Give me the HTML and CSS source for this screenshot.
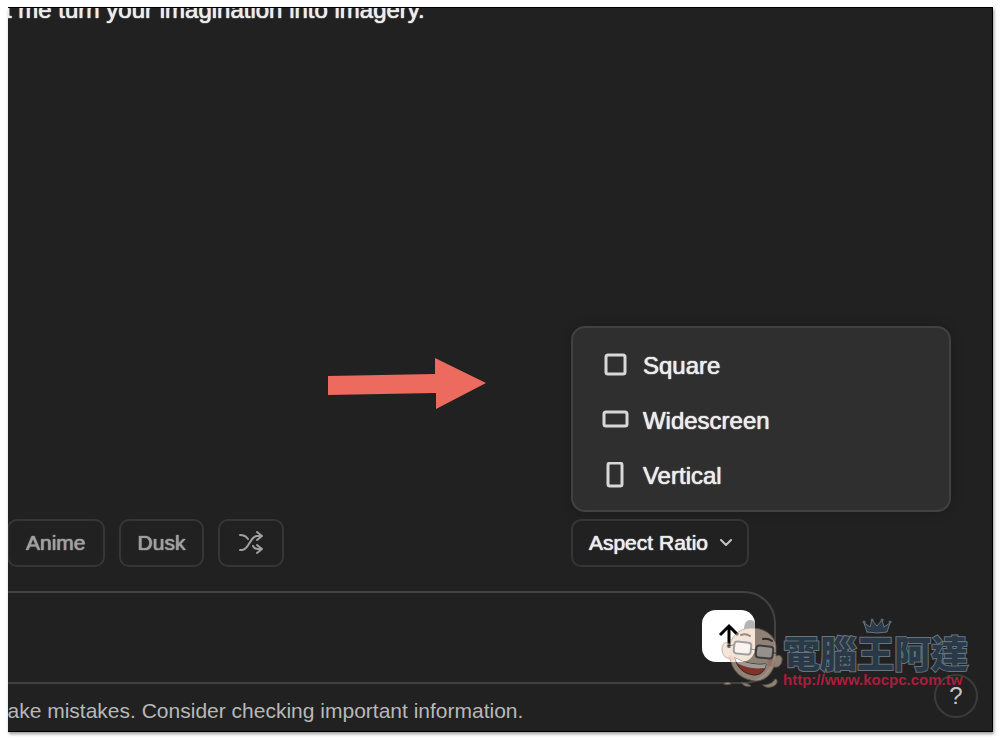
FILE: index.html
```html
<!DOCTYPE html>
<html lang="en">

<head>
    <meta charset="UTF-8">
    <meta name="viewport" content="width=device-width, initial-scale=1.0">
    <title>Image chat</title>
    <link rel="stylesheet" href="styles.css">
</head>

<body>
    <div class="frame">
        <p class="message">t me turn your imagination into imagery.</p>

        <main class="chat">
            <!-- Style chips and aspect ratio -->
            <div class="toolbar">
                <div class="chips">
                    <button type="button" class="chip">Anime</button>
                    <button type="button" class="chip">Dusk</button>
                    <button type="button" class="chip chip-icon" aria-label="Shuffle">
                        <svg width="26" height="24" viewBox="0 0 26 24">
                            <path d="M2 4c4 0 6 1 8 4M2 19h2c7 0 8-14 15-14h5M15 15c1 2 3 3 5 3h4M19 1l5 4-5 4M19 14l5 4-5 4" />
                        </svg>
                    </button>
                </div>

                <div class="dropdown">
                    <button type="button" class="chip chip-ratio" aria-haspopup="menu" aria-expanded="true">
                        Aspect Ratio
                        <svg width="12" height="8" viewBox="0 0 12 8">
                            <path d="M1 1l5 5 5-5" />
                        </svg>
                    </button>
                    <div class="menu" role="menu">
                        <button type="button" class="menu-item" role="menuitem">
                            <svg width="28" height="28" viewBox="0 0 28 28">
                                <rect x="5" y="3" width="19" height="19" rx="2" />
                            </svg>
                            Square
                        </button>
                        <button type="button" class="menu-item" role="menuitem">
                            <svg width="28" height="28" viewBox="0 0 28 28">
                                <rect x="3" y="5" width="23" height="14" rx="2" />
                            </svg>
                            Widescreen
                        </button>
                        <button type="button" class="menu-item" role="menuitem">
                            <svg width="28" height="28" viewBox="0 0 28 28">
                                <rect x="7" y="1" width="14" height="23" rx="2" />
                            </svg>
                            Vertical
                        </button>
                    </div>
                </div>
            </div>

            <!-- Prompt box -->
            <form class="composer">
                <textarea class="prompt" aria-label="Message" rows="1"></textarea>
                <button type="button" class="send" aria-label="Send">
                    <svg width="24" height="26" viewBox="0 0 24 26">
                        <path d="M12 25V3M3 12l9-9 9 9" />
                    </svg>
                </button>
            </form>
        </main>

        <p class="note">make mistakes. Consider checking important information.</p>

        <button type="button" class="help" aria-label="Help">?</button>

        <!-- Red arrow pointing at the menu -->
        <svg class="arrow" width="160" height="52" viewBox="0 0 160 52">
            <path d="M1 18L108 16V0L159 25L109 51V35L1 37Z" />
        </svg>

        <!-- Site watermark -->
        <div class="watermark">
            <svg width="62" height="72" viewBox="0 0 62 72">
                <path class="hair" d="M23 12c0-5 2-9 6-9 4 0 6 3 5 9z" />
                <path class="skin" d="M9 27C12 16 22 10 33 11c12 1 21 8 22 18v10c4-2 7 1 6 5-1 5-4 7-8 6-4 9-10 14-18 14-13-1-22-8-25-19l-1-4c-5 1-8-4-8-9 0-6 4-8 8-5z" />
                <path class="skin" d="M3 67c2-2 5-2 7 0-2 1-5 1-7 0zM21 66c4 0 7 1 9 3-4 1-8 0-9-3zM42 68c5 0 10-2 12-6 3 0 3 5-1 7-4 2-9 2-11-1z" />
                <circle class="blush" cx="50" cy="46" r="4" />
                <circle class="blush" cx="10" cy="41" r="3" />
                <path class="line" d="M20 18q5-2 9 1M42 22q5-1 9 2" />
                <rect class="glass" x="13" y="25" width="17" height="12" rx="3" transform="rotate(6 21 31)" />
                <rect class="glass" x="35" y="29" width="17" height="12" rx="3" transform="rotate(6 43 35)" />
                <path class="frames" d="M30 32l5 1M6 29l7-1M52 36l4 0" />
                <path class="mouth" d="M14 41q15 8 31 6c-1 7-5 11-12 11-10-1-17-7-19-17z" />
                <path class="teeth" d="M14 41q15 8 31 6l-1 4q-16 2-28-5z" />
            </svg>
            <div class="site">
                <svg class="crown" width="30" height="16" viewBox="0 0 30 16">
                    <path d="M5 14L2 5l6 4 2-7 5 6 5-6 2 7 6-4-3 9q-10 2-20 0z" />
                    <circle cx="2" cy="4" r="1" />
                    <circle cx="10" cy="2" r="1" />
                    <circle cx="20" cy="2" r="1" />
                    <circle cx="28" cy="4" r="1" />
                </svg>
                <span class="site-name" lang="zh-Hant">電腦王阿達</span>
                <span class="site-url">http://www.kocpc.com.tw</span>
            </div>
        </div>
    </div>
</body>

</html>
```
FILE: styles.css
```css
* {
    box-sizing: border-box;
}

body {
    margin: 0;
    padding: 7px 7px 8px 8px;
    height: 100vh;
    background-color: #fff;
    font-family: "Liberation Sans", Arial, sans-serif;
    color: #ececec;
}

button {
    font-family: inherit;
    cursor: pointer;
}

svg {
    display: block;
    flex-shrink: 0;
    fill: none;
    stroke: currentColor;
    stroke-width: 2;
    stroke-linecap: round;
    stroke-linejoin: round;
}

.frame {
    position: relative;
    display: flex;
    flex-direction: column;
    height: 100%;
    overflow: hidden;
    background-color: #212121;
    border: 1px solid #000;
    border-left: none;
    box-shadow: 1px 2px 3px rgba(0, 0, 0, 0.4);
}

.message,
.chip,
.menu-item {
    text-shadow: 0 0 1px currentColor, 0 0 1px currentColor;
}

.message {
    margin: -12px 0 0 -3px;
    font-size: 24px;
    line-height: 28px;
    white-space: nowrap;
}

.chat {
    margin-top: auto;
    margin-right: 216px;
}

/* Chips */
.toolbar {
    display: flex;
    justify-content: space-between;
    padding-right: 27px;
    margin-bottom: 24px;
}

.chips {
    display: flex;
    gap: 14px;
    margin-left: -1px;
}

.chip {
    display: flex;
    align-items: center;
    height: 48px;
    padding: 0 17px;
    border: 2px solid #363636;
    border-radius: 10px;
    background: none;
    color: #a0a0a0;
    font-size: 21px;
}

.chip-icon {
    padding: 0 18px;
}

.chip-ratio {
    gap: 12px;
    padding: 0 15px 0 16px;
    color: #ececec;
}

.chip-ratio svg {
    color: #c4c4c4;
}

/* Menu */
.dropdown {
    position: relative;
}

.menu {
    position: absolute;
    left: 0;
    bottom: calc(100% + 7px);
    width: 380px;
    padding: 10px 8px 7px;
    background-color: #2f2f2f;
    border: 2px solid #414141;
    border-radius: 14px;
    box-shadow: 0 0 12px rgba(0, 0, 0, 0.2);
}

.menu-item {
    display: flex;
    align-items: center;
    gap: 14px;
    width: 100%;
    height: 55px;
    padding: 0 20px;
    border: none;
    background: none;
    color: #ececec;
    font-size: 24px;
}

.menu-item svg {
    stroke-width: 3;
    color: #d8d8d8;
}

/* Prompt box */
.composer {
    display: flex;
    align-items: center;
    height: 93px;
    margin-left: -40px;
    padding: 0 19px 4px 60px;
    border: 2px solid #424242;
    border-radius: 32px;
}

.prompt {
    flex: 1;
    border: none;
    outline: none;
    resize: none;
    background: none;
    color: inherit;
    font: inherit;
}

.send {
    display: flex;
    align-items: center;
    justify-content: center;
    width: 53px;
    height: 52px;
    border: none;
    border-radius: 14px;
    background-color: #fff;
    color: #000;
}

.send svg {
    stroke-width: 3;
    stroke-linecap: butt;
    stroke-linejoin: miter;
}

.note {
    margin: 15px 0 8px -18px;
    font-size: 21px;
    line-height: 24px;
    color: #b8b8b8;
    white-space: nowrap;
}

.help {
    position: absolute;
    right: 14px;
    bottom: 13px;
    width: 44px;
    height: 44px;
    padding: 0;
    border: 2px solid #3c3c3c;
    border-radius: 50%;
    background: none;
    color: #c8c8c8;
    font-size: 24px;
}

.arrow {
    position: absolute;
    right: 505px;
    bottom: 321px;
    fill: #ec6a5e;
    stroke: none;
}

/* Watermark */
.watermark {
    position: absolute;
    right: 21px;
    bottom: 42px;
    display: flex;
    align-items: flex-end;
    pointer-events: none;
}

.watermark > svg {
    opacity: 0.55;
    stroke: none;
}

.hair {
    fill: #777;
}

.skin {
    fill: #ecd0bb;
    stroke: #8d7668;
    stroke-width: 1;
}

.blush {
    fill: #e88a70;
    fill-opacity: 0.4;
}

.line,
.frames {
    stroke: #3a3330;
}

.frames {
    stroke-width: 1;
}

.glass {
    fill: #fff;
    fill-opacity: 0.6;
    stroke: #555;
}

.mouth {
    fill: #d2412f;
    stroke: #3a2a26;
    stroke-width: 1;
}

.teeth {
    fill: #fff;
}

.site {
    display: flex;
    flex-direction: column;
    width: 188px;
}

.crown {
    align-self: center;
    fill: #2b3b49;
    stroke: #68737b;
    stroke-width: 1;
}

.site-name {
    font-family: "Noto Sans CJK TC", sans-serif;
    font-size: 37px;
    font-weight: 900;
    line-height: 37px;
    color: #293947;
    -webkit-text-stroke: 2px #68737b;
    paint-order: stroke fill;
}

.site-url {
    font-size: 15px;
    font-weight: bold;
    line-height: 18px;
    color: #a81f3c;
}
```
